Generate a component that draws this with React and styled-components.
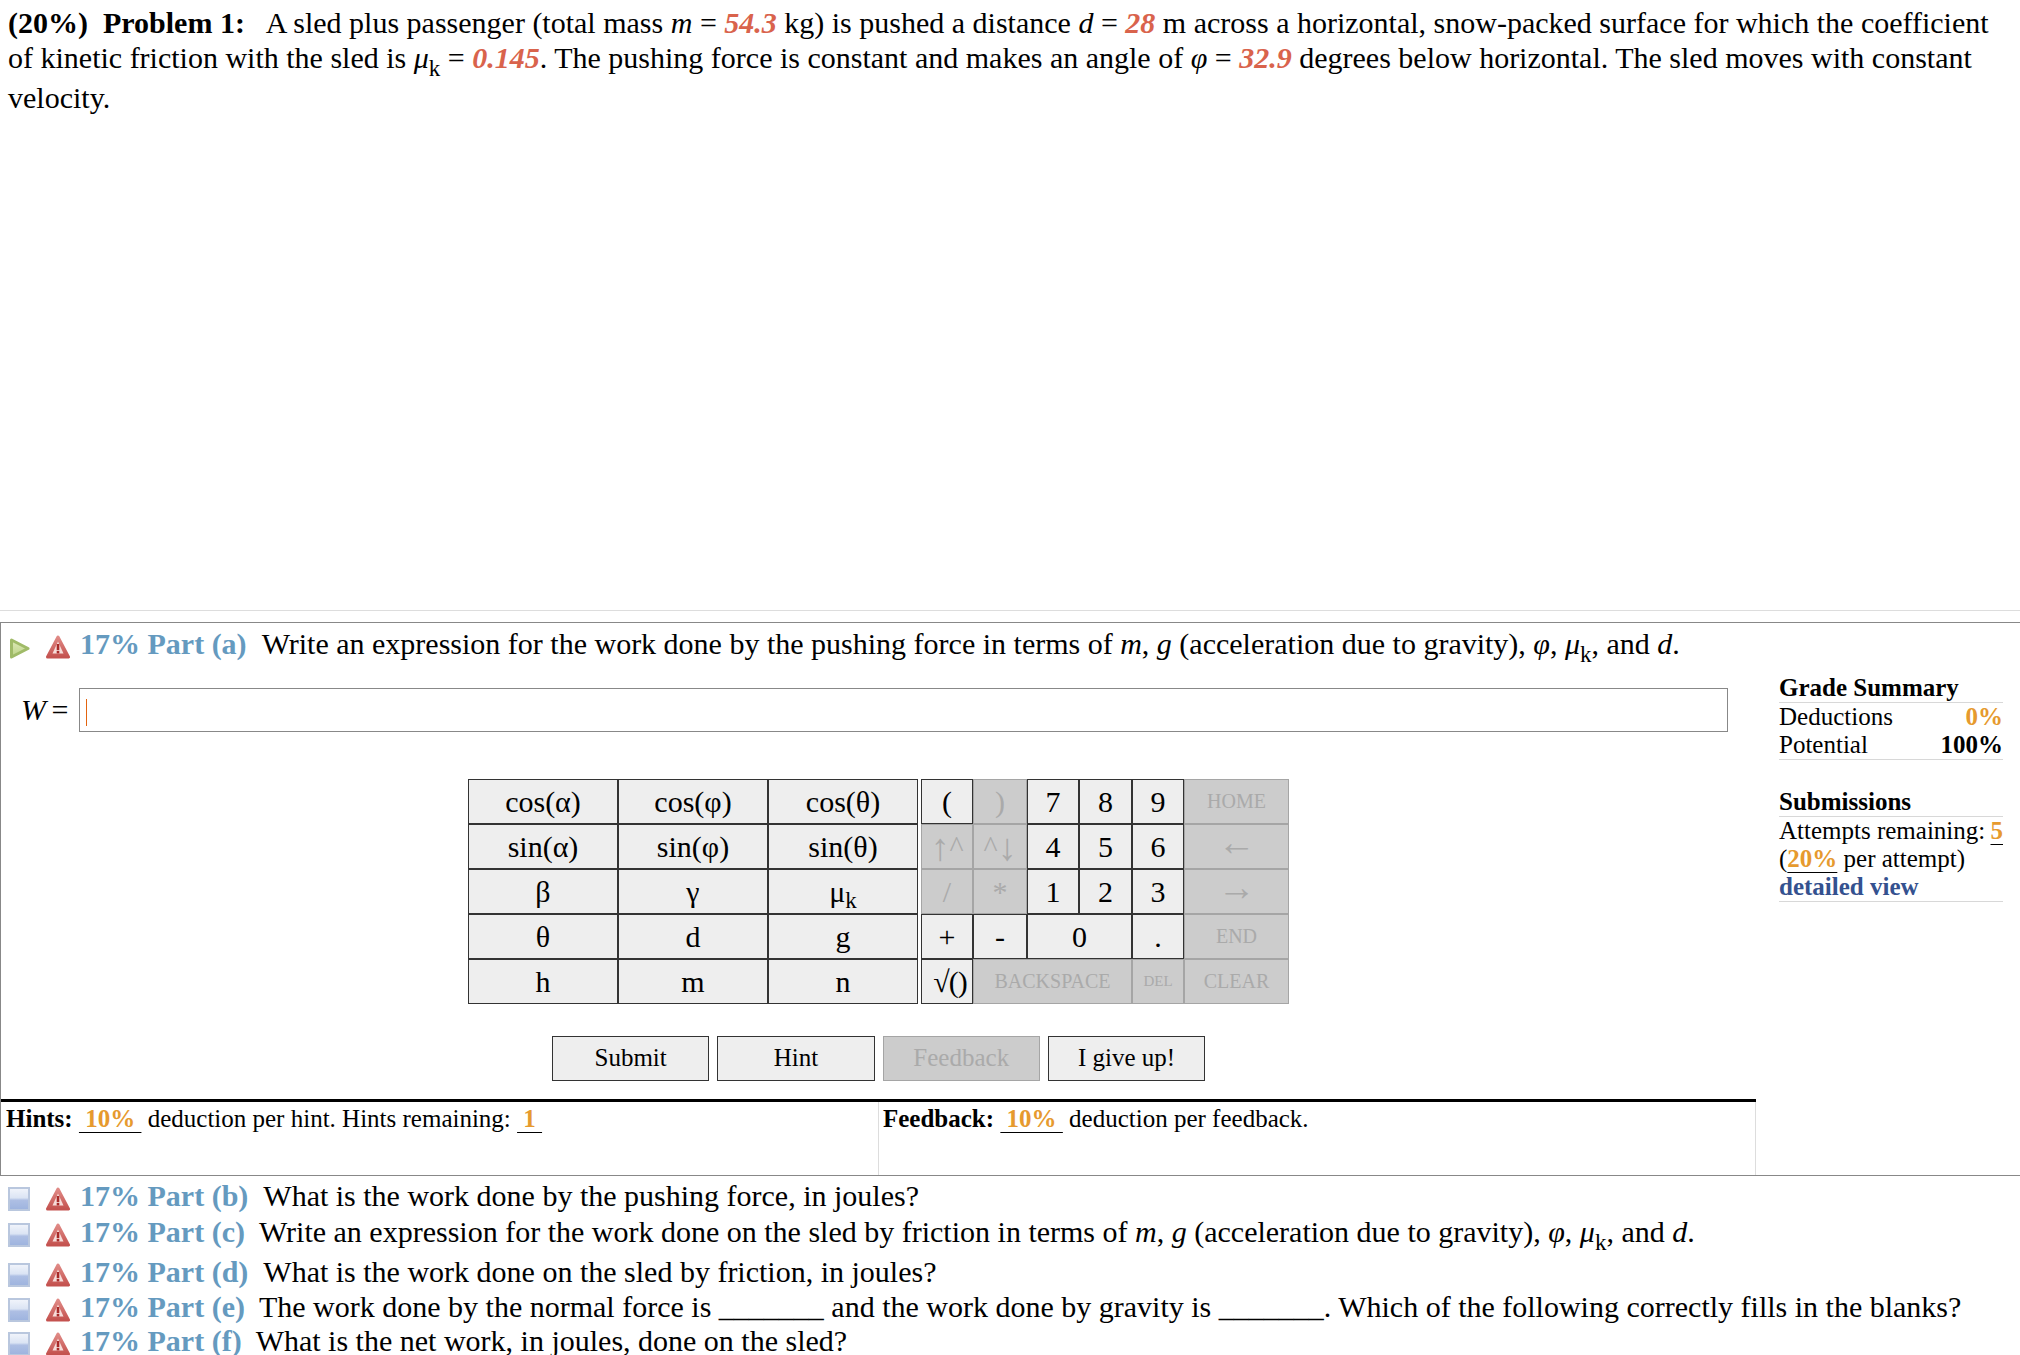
import React from 'react';
import styled, { createGlobalStyle } from 'styled-components';

const Global = createGlobalStyle`
    html, body {
        margin: 0;
        padding: 0;
        background: #fff;
    }
    body {
        font-family: "Liberation Serif", "Times New Roman", serif;
        font-size: 30px;
        color: #000;
    }
`;

const Page = styled.div`
    width: 2020px;
    height: 1355px;
    overflow: hidden;
`;
const Problem = styled.div`
    height: 610px;
    box-sizing: border-box;
    padding: 5px 8px 0;
    line-height: 35px;
`;
const Given = styled.b`
    font-style: italic;
    color: #d9634c;
`;
const Sub = styled.sub`
    font-size: 23px;
    line-height: 22px;
    vertical-align: -8px;
`;
const Rule = styled.div`
    height: 1px;
    background: #ddd;
    margin-bottom: 11px;
`;
const PartBox = styled.div`
    display: flex;
    height: 554px;
    box-sizing: border-box;
    border: 1px solid #888;
    border-right: 0;
`;
const MainCol = styled.div`
    width: 1755px;
    display: flex;
    flex-direction: column;
`;
const PartRow = styled.div`
    display: flex;
    align-items: flex-start;
    box-sizing: border-box;
    height: ${props => props.h}px;
    padding: ${props => props.top || 0}px 0 0 ${props => props.left || 8}px;
    line-height: 36px;
    white-space: pre;
`;
const PartIcon = styled.svg`
    flex: none;
    width: ${props => props.w}px;
    height: 26px;
    margin: 9px ${props => props.mr}px 0 0;
    filter: blur(0.4px);
`;
const PartTitle = styled.b`
    color: #659abf;
    margin-right: ${props => props.gap || 15}px;
`;
const InputRow = styled.div`
    display: flex;
    align-items: center;
    margin-top: 21px;
    padding-left: 20px;
`;
const Symbol = styled.span`
    width: 58px;
    word-spacing: -2px;
`;
const AnswerBox = styled.div`
    width: 1649px;
    height: 44px;
    box-sizing: border-box;
    border: 1px solid #888;
    display: flex;
    align-items: center;
    padding-left: 6px;
`;
const Caret = styled.span`
    width: 1px;
    height: 27px;
    margin-top: 5px;
    background: #e3640f;
`;
const Keypad = styled.div`
    display: flex;
    gap: 3px;
    margin: 47px 0 0 467px;
`;
const KeyGrid = styled.div`
    display: grid;
    grid-template-columns: ${props => props.cols};
    grid-auto-rows: 45px;
`;
const Key = styled.div`
    display: flex;
    align-items: center;
    justify-content: center;
    box-sizing: border-box;
    grid-column: span ${props => props.span || 1};
    font-size: ${props => props.size || 30}px;
    background: ${props => props.off ? '#ccc' : '#eee'};
    color: ${props => props.off ? '#aaa' : '#000'};
    border: 1px solid ${props => props.off ? '#a5a5a5' : '#333'};
    white-space: pre;
`;
const RootKey = styled(Key)`
    padding-left: 6px;
    letter-spacing: -1px;
`;
const KeySub = styled.sub`
    font-size: 23px;
    line-height: 0;
    vertical-align: -6px;
`;
const Arrow = styled.span`
    display: block;
    font-size: 38px;
    line-height: 1;
    margin-bottom: ${props => props.lift || 0}px;
`;
const Buttons = styled.div`
    display: flex;
    gap: 8px;
    margin: 32px 0 0 551px;
`;
const Button = styled.div`
    width: 157.3px;
    height: 45px;
    box-sizing: border-box;
    display: flex;
    align-items: center;
    justify-content: center;
    padding-bottom: 1px;
    font-size: 25px;
    background: ${props => props.off ? '#ccc' : '#eee'};
    color: ${props => props.off ? '#aaa' : '#000'};
    border: 1px solid ${props => props.off ? '#a5a5a5' : '#333'};
`;
const HintBar = styled.div`
    display: flex;
    flex: 1;
    margin-top: 18px;
    border-top: 3px solid #000;
    font-size: 25px;
    line-height: 33px;
    white-space: pre;
`;
const HintCell = styled.div`
    padding-left: ${props => props.pad}px;
    width: ${props => props.w}px;
    box-sizing: border-box;
    border-left: ${props => props.line ? '1px solid #ddd' : '0'};
    border-right: ${props => props.end ? '1px solid #ddd' : '0'};
`;
const Amount = styled.b`
    color: #e69a2e;
    text-decoration: underline;
    text-decoration-color: #000;
    text-underline-offset: 5px;
    text-decoration-thickness: 1px;
`;
const Side = styled.aside`
    width: 224px;
    margin: 51px 0 0 23px;
    font-size: 25px;
    line-height: 28px;
`;
const SideHead = styled.div`
    font-weight: bold;
    border-bottom: 1px solid #d8d8d8;
    height: 28px;
`;
const SideBody = styled.div`
    border-bottom: 1px solid #d8d8d8;
    margin-bottom: ${props => props.mb || 0}px;
`;
const SideRow = styled.div`
    display: flex;
    justify-content: space-between;
    white-space: nowrap;
`;
const Pct = styled.b`
    color: ${props => props.plain ? '#000' : '#e69a2e'};
`;
const DetailLink = styled.b`
    color: #34518f;
    display: block;
`;
const Collapsed = styled.div`
    padding-top: 2px;
`;

const PlayIcon = () => (
    <PartIcon w={22} mr={16} viewBox="0 0 22 26">
        <defs>
            <linearGradient id="play" x1="0" y1="0" x2="0" y2="1">
                <stop offset="0" stopColor="#dfe9b8" />
                <stop offset="1" stopColor="#bcd488" />
            </linearGradient>
        </defs>
        <path d="M3.5 5 L20 13.5 L3.5 22 Z" fill="url(#play)" stroke="#a0bb68" strokeWidth="3" strokeLinejoin="round" />
    </PartIcon>
);
const BoxIcon = () => (
    <PartIcon w={22} mr={16} viewBox="0 0 22 26">
        <defs>
            <linearGradient id="box" x1="0" y1="0" x2="0" y2="1">
                <stop offset="0" stopColor="#f2f5fb" />
                <stop offset="0.45" stopColor="#dbe4f4" />
                <stop offset="0.55" stopColor="#aebfe4" />
                <stop offset="1" stopColor="#9db3de" />
            </linearGradient>
        </defs>
        <rect x="1" y="1" width="20" height="22" fill="url(#box)" stroke="#b9c7de" strokeWidth="2" />
    </PartIcon>
);
const WarnIcon = ({ id }) => (
    <PartIcon w={24} mr={10} viewBox="0 0 24 26">
        <defs>
            <linearGradient id={id} x1="0" y1="0" x2="0" y2="1">
                <stop offset="0" stopColor="#e08a86" />
                <stop offset="1" stopColor="#c4524f" />
            </linearGradient>
        </defs>
        <path d="M12 2 L22.5 22 H1.5 Z" fill={`url(#${id})`} stroke={`url(#${id})`} strokeWidth="3" strokeLinejoin="round" />
        <path d="M12 6.5 L17.5 18.5 H6.5 Z" fill="#f6dcd9" />
        <rect x="10.7" y="9" width="2.6" height="6.2" fill="#a92a28" />
        <rect x="10.7" y="16" width="2.6" height="2.4" fill="#a92a28" />
    </PartIcon>
);

const mathList = (
    <>
        <i>φ</i>, <i>μ</i><Sub>k</Sub>, and <i>d</i>.
    </>
);

const collapsed = [
    { id: 'b', h: 36, text: <>What is the work done by the pushing force, in joules?</> },
    {
        id: 'c',
        h: 40,
        gap: 14,
        text: <>Write an expression for the work done on the sled by friction in terms of <i>m</i>, <i>g</i> (acceleration due to gravity), {mathList}</>,
    },
    { id: 'd', h: 35, text: <>What is the work done on the sled by friction, in joules?</> },
    {
        id: 'e',
        h: 34,
        gap: 14,
        text: <>The work done by the normal force is _______ and the work done by gravity is _______. Which of the following correctly fills in the blanks?</>,
    },
    { id: 'f', h: 36, gap: 14, text: <>What is the net work, in joules, done on the sled?</> },
];

const App = () => (
    <Page>
        <Global />
        <Problem>
            <b>(20%)&nbsp; Problem 1:</b>&nbsp;&nbsp; A sled plus passenger (total mass <i>m</i> = <Given>54.3</Given> kg) is pushed a distance <i>d</i> = <Given>28</Given> m across a horizontal, snow-packed surface for which the coefficient of kinetic friction with the sled is <i>μ</i><Sub>k</Sub> = <Given>0.145</Given>. The pushing force is constant and makes an angle of <i>φ</i> = <Given>32.9</Given> degrees below horizontal. The sled moves with constant velocity.
        </Problem>
        <Rule />
        <PartBox>
            <MainCol>
                <PartRow h={44} top={3} left={7}>
                    <PlayIcon />
                    <WarnIcon id="warn-a" />
                    <PartTitle>17% Part (a)</PartTitle>
                    <span>Write an expression for the work done by the pushing force in terms of <i>m</i>, <i>g</i> (acceleration due to gravity), {mathList}</span>
                </PartRow>
                <InputRow>
                    <Symbol><i>W</i> =</Symbol>
                    <AnswerBox><Caret /></AnswerBox>
                </InputRow>
                <Keypad>
                    <KeyGrid cols="repeat(3, 150px)">
                        <Key>cos(α)</Key><Key>cos(φ)</Key><Key>cos(θ)</Key>
                        <Key>sin(α)</Key><Key>sin(φ)</Key><Key>sin(θ)</Key>
                        <Key>β</Key><Key>γ</Key><Key><span>μ<KeySub>k</KeySub></span></Key>
                        <Key>θ</Key><Key>d</Key><Key>g</Key>
                        <Key>h</Key><Key>m</Key><Key>n</Key>
                    </KeyGrid>
                    <KeyGrid cols="52px 54px 52px 53px 52px 105px">
                        <Key>(</Key><Key off>)</Key><Key>7</Key><Key>8</Key><Key>9</Key><Key off size={20}>HOME</Key>
                        <Key off><Arrow>↑</Arrow>^</Key><Key off>^<Arrow>↓</Arrow></Key><Key>4</Key><Key>5</Key><Key>6</Key><Key off><Arrow lift={9}>←</Arrow></Key>
                        <Key off>/</Key><Key off>*</Key><Key>1</Key><Key>2</Key><Key>3</Key><Key off><Arrow lift={9}>→</Arrow></Key>
                        <Key>+</Key><Key>-</Key><Key span={2}>0</Key><Key>.</Key><Key off size={20}>END</Key>
                        <RootKey>√()</RootKey><Key off span={3} size={20}>BACKSPACE</Key><Key off size={15}>DEL</Key><Key off size={20}>CLEAR</Key>
                    </KeyGrid>
                </Keypad>
                <Buttons>
                    <Button>Submit</Button>
                    <Button>Hint</Button>
                    <Button off>Feedback</Button>
                    <Button>I give up!</Button>
                </Buttons>
                <HintBar>
                    <HintCell w={877} pad={5}>
                        <b>Hints:</b> <Amount>{' 10% '}</Amount> deduction per hint. Hints remaining: <Amount>{' 1 '}</Amount>
                    </HintCell>
                    <HintCell w={878} pad={4} line end>
                        <b>Feedback:</b> <Amount>{' 10% '}</Amount> deduction per feedback.
                    </HintCell>
                </HintBar>
            </MainCol>
            <Side>
                <SideHead>Grade Summary</SideHead>
                <SideBody mb={28}>
                    <SideRow><span>Deductions</span><Pct>0%</Pct></SideRow>
                    <SideRow><span>Potential</span><Pct plain>100%</Pct></SideRow>
                </SideBody>
                <SideHead>Submissions</SideHead>
                <SideBody>
                    <SideRow><span>Attempts remaining:</span><Amount>5</Amount></SideRow>
                    <div>(<Amount>20%</Amount> per attempt)</div>
                    <DetailLink>detailed view</DetailLink>
                </SideBody>
            </Side>
        </PartBox>
        <Collapsed>
            {collapsed.map(part => (
                <PartRow key={part.id} h={part.h}>
                    <BoxIcon />
                    <WarnIcon id={`warn-${part.id}`} />
                    <PartTitle gap={part.gap}>17% Part ({part.id})</PartTitle>
                    <span>{part.text}</span>
                </PartRow>
            ))}
        </Collapsed>
    </Page>
);

export default App;
